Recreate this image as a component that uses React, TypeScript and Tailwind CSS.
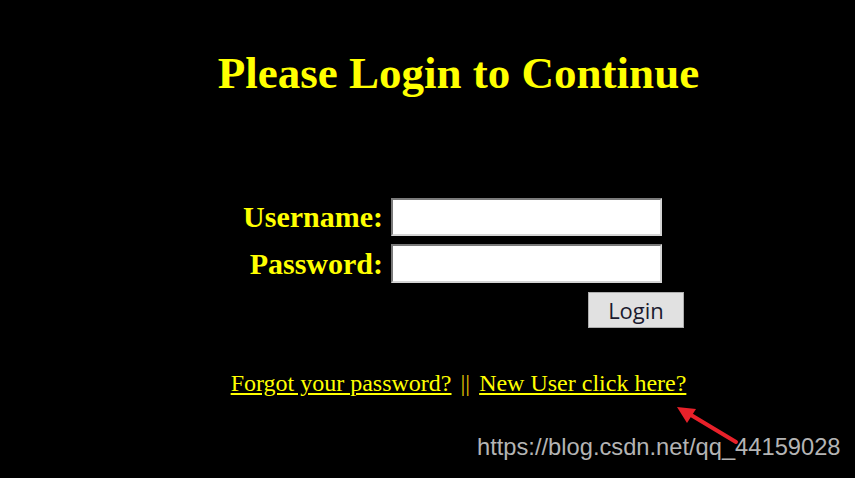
import React from "react";

export default function App() {
  const serif = { fontFamily: '"Liberation Serif", "Times New Roman", serif' };
  return (
    <div className="relative w-[855px] h-[478px] bg-black overflow-hidden" style={serif}>
      <div className="flex flex-col">
        <div className="pt-[46px] pl-[62px] flex justify-center">
          <h1 className="text-[45px] leading-[54px] font-bold text-[#ffff00] whitespace-nowrap">Please Login to Continue</h1>
        </div>
        <div className="mt-[98px] ml-[234px] grid grid-cols-[149px_271px] gap-x-[8px] gap-y-[8px] items-center">
          <label className="text-right text-[30px] font-bold text-[#ffff00] leading-[38px] whitespace-nowrap">Username:</label>
          <input type="text" className="h-[38px] w-[271px] bg-white border-2 border-[#7a7a7a] border-b-[#d4d4d4] border-r-[#d4d4d4]" />
          <label className="text-right text-[30px] font-bold text-[#ffff00] leading-[38px] whitespace-nowrap">Password:</label>
          <input type="password" className="h-[39px] w-[271px] bg-white border-2 border-[#7a7a7a] border-b-[#d4d4d4] border-r-[#d4d4d4]" />
        </div>
        <div className="mt-[9px] ml-[588px]">
          <button
            className="w-[96px] h-[36px] bg-[#e1e1e1] border border-[#adadad] text-[22px] text-[#1a1a2e] leading-none"
            style={{ fontFamily: '"Open Sans", "Liberation Sans", sans-serif' }}
          >
            Login
          </button>
        </div>
        <div className="mt-[40px] pl-[62px] flex justify-center items-baseline text-[24px] leading-[30px] text-[#ffff00] whitespace-nowrap">
          <a href="#" className="underline underline-offset-2">Forgot your password?</a>
          <span className="mx-[9px] text-[#e0c000]">||</span>
          <a href="#" className="underline underline-offset-2">New User click here?</a>
        </div>
      </div>
      <svg className="absolute left-[670px] top-[400px]" width="80" height="50" viewBox="0 0 80 50">
        <line x1="66" y1="42" x2="16" y2="12" stroke="#e8212a" strokeWidth="4" strokeLinecap="round" />
        <polygon points="7,7 26,9 17,23" fill="#e8212a" />
      </svg>
      <div
        className="absolute left-[477px] top-[433px] text-[23.7px] leading-[28px] text-[#b4b4b4] whitespace-nowrap"
        style={{ fontFamily: '"Liberation Sans", Arial, sans-serif' }}
      >
        https://blog.csdn.net/qq_44159028
      </div>
    </div>
  );
}
